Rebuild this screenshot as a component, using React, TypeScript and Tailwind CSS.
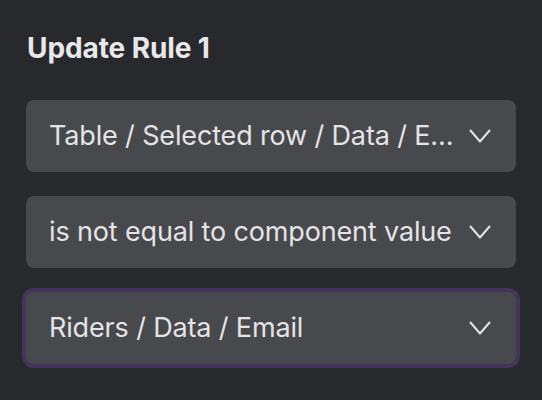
const rules = [
  { id: "field", label: "Table / Selected row / Data / Email" },
  { id: "op", label: "is not equal to component value" },
  { id: "value", label: "Riders / Data / Email", focused: true },
];

function Chevron() {
  return (
    <svg width="22" height="14" viewBox="0 0 22 14" fill="none" className="shrink-0 text-[#e4e4e6]">
      <polyline points="1.5,1.5 11,12.5 20.5,1.5" stroke="currentColor" strokeWidth={2} strokeLinecap="round" strokeLinejoin="round" />
    </svg>
  );
}

export default function App() {
  return (
    <div className="w-[542px] h-[400px] bg-[#28292c] px-[26px] pt-[30px] font-['Inter',sans-serif] overflow-hidden">
      <h2 className="text-[28px] leading-[36px] font-bold text-[#e8e8ea] pl-[1px] tracking-[-0.1px]">Update Rule 1</h2>

      <div className="mt-[34px] flex flex-col gap-6">
        {rules.map((r) => (
          <button
            key={r.id}
            className={`h-[72px] w-full flex items-center justify-between gap-[10px] rounded-[8px] bg-[#48494d] pl-[23px] pr-[25px] text-left ${
              r.focused ? "ring-4 ring-[#44365a]" : ""
            }`}
          >
            <span className="truncate text-[27px] leading-[36px] tracking-[-0.15px] text-[#e4e4e6]">{r.label}</span>
            <Chevron />
          </button>
        ))}
      </div>
    </div>
  );
}
